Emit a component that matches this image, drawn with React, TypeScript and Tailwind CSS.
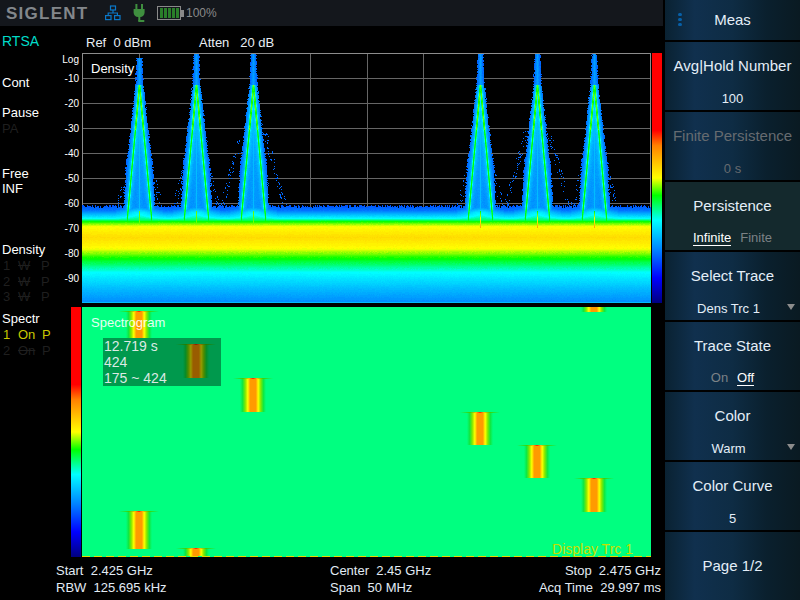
import React from 'react';

// colour map used by both density plot and colour bars
const STOPS: [number, number[]][] = [
    [0, [0, 0, 128]],
    [0.1, [0, 0, 255]],
    [0.21, [0, 128, 255]],
    [0.33, [0, 255, 255]],
    [0.38, [0, 255, 128]],
    [0.43, [0, 255, 0]],
    [0.5, [255, 255, 0]],
    [0.63, [255, 128, 0]],
    [0.69, [255, 0, 0]],
    [1, [255, 0, 0]],
];

const lerpTable = (table: [number, number][], x: number) => {
    if (x <= table[0][0]) return table[0][1];
    for (let i = 1; i < table.length; i++) {
        if (x <= table[i][0]) {
            const [x0, y0] = table[i - 1];
            const [x1, y1] = table[i];
            return y0 + ((y1 - y0) * (x - x0)) / (x1 - x0);
        }
    }
    return table[table.length - 1][1];
};

const colorOf = (v: number) => {
    for (let i = 1; i < STOPS.length; i++) {
        if (v <= STOPS[i][0]) {
            const [a, ca] = STOPS[i - 1];
            const [b, cb] = STOPS[i];
            const t = (v - a) / (b - a);
            const c = ca.map((n, k) => Math.round(n + (cb[k] - n) * t));
            return `rgb(${c[0]},${c[1]},${c[2]})`;
        }
    }
    return 'rgb(255,0,0)';
};

const FLOOR: [number, number][] = [
    [204, 0.165], [210, 0.2], [218, 0.33], [221, 0.43], [226, 0.5], [237, 0.535], [248, 0.5],
    [258, 0.43], [272, 0.33], [290, 0.26], [302, 0.22],
];
const OUTER: [number, number][] = [[54, 2.6], [85, 4], [157, 12], [158, 13], [205, 15.5], [226, 15.5]];
const PEAKS = [139, 196, 253, 480, 537, 594];
const TIPS = [58, 54, 54, 54, 54, 54];

let seed = 12345;
const rnd = () => {
    seed = (seed * 1664525 + 1013904223) % 4294967296;
    return seed / 4294967296;
};

const buildDensity = () => {
    const LEVELS = 80;
    const paths: string[][] = Array.from({ length: LEVELS }, () => []);
    const tops: number[] = [];
    for (let x = 82; x < 651; x++) tops.push(205 + Math.floor(rnd() * 3.2));

    for (let y = 53; y < 303; y++) {
        let runStart = -1;
        let runLevel = -1;
        const flush = (end: number) => {
            if (runLevel >= 0) paths[runLevel].push(`M${runStart - 82} ${y - 53}h${end - runStart}v1h${runStart - end}z`);
        };
        for (let x = 82; x <= 651; x++) {
            let v = -1;
            if (x < 651) {
                if (y >= tops[x - 82]) v = lerpTable(FLOOR, y) + (rnd() - 0.5) * 0.006;
                if (y === 302) v = 0.27;
                PEAKS.forEach((cx, i) => {
                    const a = Math.abs(x - cx);
                    if (a > 40) return;
                    if (y >= 200 && y >= tops[x - 82] && a < 24 && y < 220) {
                        // only the blue and cyan contours lift around a peak, the green one stays flat
                        const lift = 5 * Math.exp(-(a * a) / 260) * Math.min(1, (220 - y) / 8);
                        v = Math.max(v, lerpTable(FLOOR, y + lift));
                    }
                    if (y < TIPS[i] || y > 227) return;
                    const w = lerpTable(OUTER, y) + (rnd() - 0.5) * 1.6;
                    if (a <= w) {
                        const g = y < 85 ? 0 : Math.min(12.8, ((y - 85) / 137) * 12.5);
                        const d = a - g;
                        const base = 0.18 + 0.06 * (1 - a / w);
                        const amp = y < 85 ? 0 : y < 130 ? 0.46 : 0.43;
                        const line = Math.exp(-(d * d) / 4) * amp;
                        const halo = y < 85 ? 0 : Math.exp(-(d * d) / 14) * 0.07;
                        let p = Math.max(base + halo, line) + (rnd() - 0.5) * 0.01;
                        if (y > 85 && a < 1) p = Math.max(p, 0.265);
                        if (y > 210 && a < 1) p = Math.max(p, i > 2 ? 0.42 + ((y - 210) / 16) * 0.16 : 0.46);
                        v = Math.max(v, p);
                    } else if (y > 130 && y < 207) {
                        // sparse hits either side of each peak
                        const early = i === 2 || i === 4 ? 130 : 165;
                        const c = 11 + (y - early) * 0.27;
                        if (y > early && Math.abs(a - c) < 2.5 && rnd() < 0.14) v = Math.max(v, 0.19);
                    }
                });
            }
            const level = v < 0 ? -1 : Math.min(LEVELS - 1, Math.floor((v / 0.7) * LEVELS));
            if (level !== runLevel) {
                flush(x);
                runStart = x;
                runLevel = level;
            }
        }
        flush(651);
    }
    return paths
        .map((d, i) => ({ d: d.join(''), fill: colorOf(((i + 0.5) / LEVELS) * 0.7) }))
        .filter((p) => p.d.length > 0);
};

const DENSITY = buildDensity();

const H_LINES = [78, 103, 128, 153, 178, 203];
const V_LINES = [139, 196, 253, 310, 367, 423, 480, 537, 594];

const DensityPlot = () => (
    <svg width={569} height={250} viewBox="0 0 569 250" shapeRendering="crispEdges" className="block">
        <rect width={569} height={250} fill="#000" />
        {H_LINES.map((y) => (
            <rect key={y} x={0} y={y - 53} width={569} height={1} fill="#666" />
        ))}
        {V_LINES.map((x) => (
            <rect key={x} x={x - 82} y={0} width={1} height={160} fill="#666" />
        ))}
        <rect x={0} y={0} width={569} height={1} fill="#8c8c8c" />
        <rect x={0} y={0} width={1} height={160} fill="#8c8c8c" />
        <rect x={568} y={0} width={1} height={160} fill="#8c8c8c" />
        {DENSITY.map((p) => (
            <path key={p.fill} d={p.d} fill={p.fill} />
        ))}
    </svg>
);

const BLOCKS = [
    { cx: 139, y: 311, h: 27, line: true },
    { cx: 196, y: 344, h: 34, line: true },
    { cx: 253, y: 378, h: 34, line: true },
    { cx: 480, y: 412, h: 33, line: true },
    { cx: 537, y: 445, h: 33, line: true },
    { cx: 594, y: 478, h: 34, line: true },
    { cx: 594, y: 307, h: 5, line: false },
    { cx: 139, y: 511, h: 38, line: true },
    { cx: 196, y: 548, h: 8, line: true },
];

const SpectrogramPlot = () => (
    <svg width={569} height={250} viewBox="0 0 569 250" className="block">
        <defs>
            <linearGradient id="waterfall">
                <stop offset="0" stopColor="#00ff80" />
                <stop offset="0.1" stopColor="#10e840" />
                <stop offset="0.2" stopColor="#80e800" />
                <stop offset="0.3" stopColor="#ffff00" />
                <stop offset="0.39" stopColor="#ff9a00" />
                <stop offset="0.61" stopColor="#ff9a00" />
                <stop offset="0.7" stopColor="#ffff00" />
                <stop offset="0.8" stopColor="#80e800" />
                <stop offset="0.9" stopColor="#10e840" />
                <stop offset="1" stopColor="#00ff80" />
            </linearGradient>
            <linearGradient id="waterfallTop">
                <stop offset="0" stopColor="#00ff80" />
                <stop offset="0.25" stopColor="#40d000" />
                <stop offset="0.4" stopColor="#ffc000" />
                <stop offset="0.5" stopColor="#ff2000" />
                <stop offset="0.6" stopColor="#ffc000" />
                <stop offset="0.75" stopColor="#40d000" />
                <stop offset="1" stopColor="#00ff80" />
            </linearGradient>
        </defs>
        <rect width={569} height={250} fill="#00ff80" />
        {BLOCKS.map((b) => (
            <g key={`${b.cx}-${b.y}`} shapeRendering="crispEdges">
                <rect x={b.cx - 13 - 82} y={b.y - 307} width={26} height={b.h} fill="url(#waterfall)" />
                {b.line && <rect x={b.cx - 20 - 82} y={b.y - 307} width={40} height={1} fill="url(#waterfallTop)" />}
            </g>
        ))}
        <line x1={0} y1={249.5} x2={569} y2={249.5} stroke="#e6d800" strokeWidth={1} strokeDasharray="8 4" />
    </svg>
);

const ColorBar = () => (
    <div className="w-[10px] h-[250px] bg-[linear-gradient(to_bottom,#ff0000_0%,#ff0000_31%,#ff8000_37%,#ffff00_50%,#00ff00_57%,#00ff80_62%,#00ffff_67%,#0080ff_79%,#0000ff_90%,#000080_100%)]" />
);

const DimRow = ({ n, mid }: { n: string; mid: string }) => (
    <div className="flex h-[15.5px] leading-[16px] text-[#1f1f1f]">
        <span className="w-[16px] pl-[3px]">{n}</span>
        <span className="w-[25px] pl-[2px] line-through">{mid}</span>
        <span>P</span>
    </div>
);

const Sidebar = () => (
    <div className="w-[60px] shrink-0 text-[13px] leading-[16px] text-white pt-[7px]">
        <div className="pl-[2px] text-[14px] text-[#00dcc8]">RTSA</div>
        <div className="pl-[2px] mt-[26px]">Cont</div>
        <div className="pl-[2px] mt-[14px]">Pause</div>
        <div className="pl-[2px] text-[#1f1f1f]">PA</div>
        <div className="pl-[2px] mt-[29px] leading-[15px]">Free</div>
        <div className="pl-[2px] leading-[15px]">INF</div>
        <div className="pl-[2px] mt-[46px]">Density</div>
        <DimRow n="1" mid="W" />
        <DimRow n="2" mid="W" />
        <DimRow n="3" mid="W" />
        <div className="pl-[2px] mt-[6px]">Spectr</div>
        <div className="flex text-[#c8c800]">
            <span className="w-[18px] pl-[3px]">1</span>
            <span className="w-[24px]">On</span>
            <span>P</span>
        </div>
        <div className="flex text-[#1f1f1f]">
            <span className="w-[18px] pl-[3px]">2</span>
            <span className="w-[24px] line-through">On</span>
            <span>P</span>
        </div>
    </div>
);

const AXIS = ['-10', '-20', '-30', '-40', '-50', '-60', '-70', '-80', '-90'];

const AxisLabels = () => (
    <div className="w-[22px] shrink-0 text-[10px] text-white text-right pr-[3px] leading-[25px] font-[500]">
        <div className="h-[13px] leading-[14px]">Log</div>
        {AXIS.map((a) => (
            <div key={a} className="h-[25px]">{a}</div>
        ))}
    </div>
);

const Header = () => (
    <div className="h-[26px] mr-[2px] bg-[#14171c] flex items-center pl-[6px]">
        <span className="text-[17px] font-bold tracking-[1.25px] text-[#83878b] leading-none w-[99px]">SIGLENT</span>
        <svg width={16} height={16} viewBox="0 0 16 16" fill="none" stroke="#0a78c8" strokeWidth={1.2} className="shrink-0">
            <rect x={5.5} y={1} width={5} height={4} />
            <rect x={0.6} y={10.6} width={5.4} height={4} />
            <rect x={9.6} y={10.6} width={5.4} height={4} />
            <path d="M8 5v3M3.2 10.6V8h9.2v2.6" />
        </svg>
        <svg width={13} height={18} viewBox="0 0 13 18" className="ml-[12px] shrink-0" fill="#3f8f3f">
            <rect x={2.4} y={0} width={2} height={5} />
            <rect x={8} y={0} width={2} height={5} />
            <path d="M0.6 5h11v3.5a4.5 4.5 0 0 1-4.5 4.5h-2a4.5 4.5 0 0 1-4.5-4.5z" />
            <rect x={5.3} y={12} width={2} height={5} />
            <rect x={5.3} y={16} width={6} height={2} />
        </svg>
        <div className="ml-[11px] w-[24px] h-[14px] border border-[#8a8a8a] flex items-center gap-[1px] pl-[2px] shrink-0">
            <span className="w-[3px] h-[10px] bg-[#2a7f2a]" />
            <span className="w-[3px] h-[10px] bg-[#2a7f2a]" />
            <span className="w-[3px] h-[10px] bg-[#2a7f2a]" />
            <span className="w-[3px] h-[10px] bg-[#2a7f2a]" />
            <span className="w-[3px] h-[10px] bg-[#2a7f2a]" />
        </div>
        <span className="w-[3px] h-[7px] bg-[#8a8a8a] shrink-0" />
        <span className="ml-[2px] text-[12px] text-[#8a8a8a]">100%</span>
    </div>
);

const BTN_BG = 'bg-[linear-gradient(to_right,#0a2232_0%,#10304e_22%,#0e2c44_50%,#0a202e_75%,#0a1a22_100%)]';

const Arrow = () => (
    <span className="absolute right-[5px] bottom-[10px] w-0 h-0 border-l-[4.5px] border-r-[4.5px] border-t-[6px] border-l-transparent border-r-transparent border-t-[#8c8c8c]" />
);

const MenuButton = ({ title, value, dim, arrow }: { title: string; value?: string; dim?: boolean; arrow?: boolean }) => (
    <div className={`relative h-[68px] shrink-0 ${BTN_BG} flex flex-col items-center ${value ? 'pt-[15px]' : 'justify-center'} ${dim ? 'text-[#666b70]' : 'text-[#e4eef8]'}`}>
        <div className="text-[15px] leading-[18px]">{title}</div>
        {value && <div className={`text-[13px] leading-[16px] mt-[16px] ${arrow ? 'pr-[8px]' : ''}`}>{value}</div>}
        {arrow && <Arrow />}
    </div>
);

const Toggle = ({ title, left, right, active, flat }: { title: string; left: string; right: string; active: 'left' | 'right'; flat?: boolean }) => (
    <div className={`h-[68px] shrink-0 ${flat ? 'bg-[#14292d]' : BTN_BG} flex flex-col items-center pt-[15px] text-[#e4eef8]`}>
        <div className="text-[15px] leading-[18px]">{title}</div>
        <div className="flex gap-[9px] text-[13px] leading-[15px] mt-[15px]">
            <span className={active === 'left' ? 'border-b border-white text-white' : 'text-[#7c8286]'}>{left}</span>
            <span className={active === 'right' ? 'border-b border-white text-white' : 'text-[#7c8286]'}>{right}</span>
        </div>
    </div>
);

const Menu = () => (
    <div className="w-[135px] shrink-0 flex flex-col gap-[2px]">
        <div className={`relative h-[40px] shrink-0 ${BTN_BG} flex items-center justify-center text-[15px] text-[#e4eef8]`}>
            <div className="absolute left-[13px] top-[13px] flex flex-col gap-[2px]">
                <span className="w-[4px] h-[3px] rounded-full bg-[#0760a8]" />
                <span className="w-[4px] h-[3px] rounded-full bg-[#0760a8]" />
                <span className="w-[4px] h-[3px] rounded-full bg-[#0760a8]" />
            </div>
            Meas
        </div>
        <MenuButton title="Avg|Hold Number" value="100" />
        <MenuButton title="Finite Persistence" value="0 s" dim />
        <Toggle title="Persistence" left="Infinite" right="Finite" active="left" flat />
        <MenuButton title="Select Trace" value="Dens Trc 1" arrow />
        <Toggle title="Trace State" left="On" right="Off" active="right" />
        <MenuButton title="Color" value="Warm" arrow />
        <MenuButton title="Color Curve" value="5" />
        <MenuButton title="Page 1/2" />
    </div>
);

const Footer = () => (
    <div className="h-[43px] pt-[5px] pl-[56px] pr-[4px] flex text-[13px] leading-[17px] text-[#e2ebf4] whitespace-pre">
        <div className="w-[274px]">
            <div>Start  2.425 GHz</div>
            <div>RBW  125.695 kHz</div>
        </div>
        <div className="flex-1">
            <div>Center  2.45 GHz</div>
            <div>Span  50 MHz</div>
        </div>
        <div className="text-right">
            <div>Stop  2.475 GHz</div>
            <div>Acq Time  29.997 ms</div>
        </div>
    </div>
);

export default function App() {
    return (
        <div className="w-[800px] h-[600px] bg-black flex overflow-hidden font-['Liberation_Sans',Arial,sans-serif]">
            <div className="w-[665px] shrink-0 flex flex-col">
                <Header />
                <div className="flex h-[531px]">
                    <Sidebar />
                    <div className="flex-1 flex flex-col">
                        <div className="h-[27px] pl-[26px] flex items-center pt-[6px] text-[13px] text-[#e8eef4] whitespace-pre">
                            <span className="w-[113px]">Ref  0 dBm</span>
                            <span>Atten   20 dB</span>
                        </div>
                        <div className="flex h-[250px]">
                            <AxisLabels />
                            <div className="relative">
                                <DensityPlot />
                                <span className="absolute left-[9px] top-[6px] text-[13px] text-white">Density</span>
                            </div>
                            <div className="ml-[1px]">
                                <ColorBar />
                            </div>
                        </div>
                        <div className="flex h-[250px] mt-[4px] pl-[11px]">
                            <ColorBar />
                            <div className="relative ml-[1px]">
                                <SpectrogramPlot />
                                <span className="absolute left-[9px] top-[6px] text-[13px] text-white/90">Spectrogram</span>
                                <div className="absolute left-[21px] top-[31px] w-[118px] h-[48px] bg-black/40 pl-[1px] text-[14px] leading-[16px] text-[#dceae4]">
                                    <div>12.719 s</div>
                                    <div>424</div>
                                    <div>175 ~ 424</div>
                                </div>
                                <span className="absolute right-[18px] bottom-[0px] text-[14px] leading-[16px] text-[#c8e000]">Display Trc 1</span>
                            </div>
                        </div>
                    </div>
                </div>
                <Footer />
            </div>
            <Menu />
        </div>
    );
}
